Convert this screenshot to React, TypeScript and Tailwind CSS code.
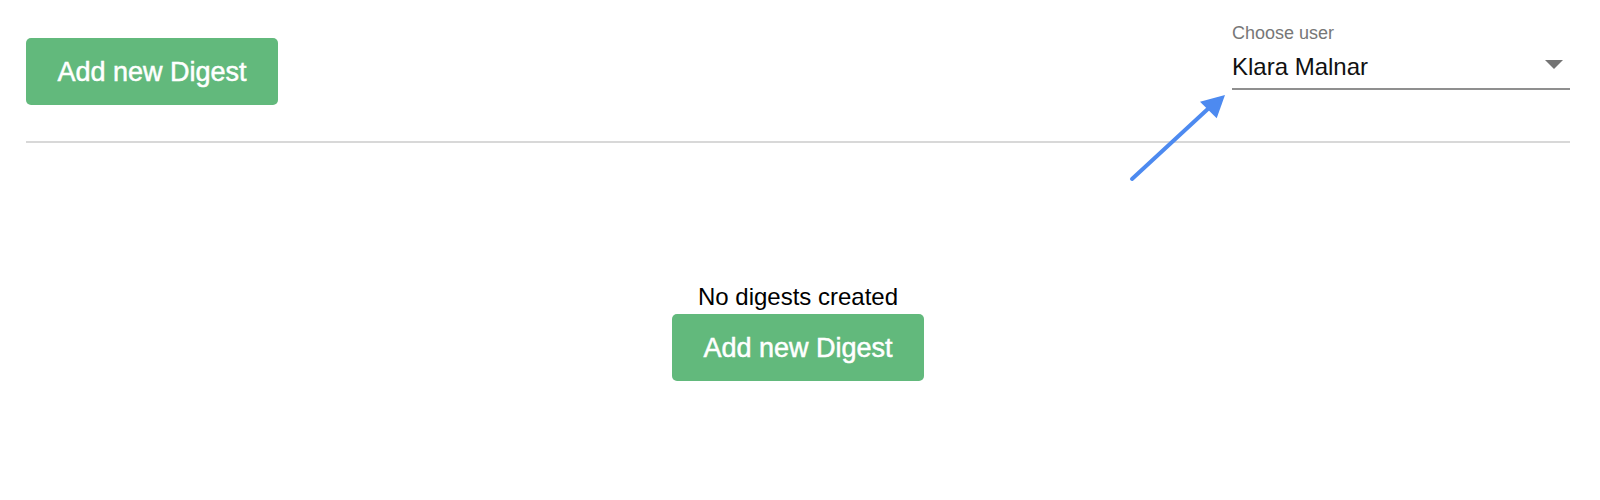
import React, { useState } from 'react';

const users = ['Klara Malnar'];

// Green call-to-action button, used in header and empty state
const AddButton: React.FC<{ onClick?: () => void }> = ({ onClick }) => (
  <button
    onClick={onClick}
    className="flex items-center justify-center w-[252px] h-[67px] pt-[2px] rounded-[5px] bg-[#62b97c] text-white text-[27px] leading-[27px] [-webkit-text-stroke:0.5px_white]"
  >
    Add new Digest
  </button>
);

const UserSelect: React.FC = () => {
  const [user] = useState(users[0]);
  return (
    <div className="w-[338px] mt-[24px]">
      <div className="text-[18px] leading-[18px] text-[#777777]">Choose user</div>
      <div className="flex items-center justify-between mt-[14px] h-[34px] border-b-2 border-[#8f8f8f]">
        <span className="text-[24px] leading-[24px] text-[#111111] pb-[10px]">{user}</span>
        <svg width="18" height="9" viewBox="0 0 18 9" className="mr-[7px] mb-[16px]">
          <path d="M0 0h18L9 9z" fill="#747474" />
        </svg>
      </div>
    </div>
  );
};

export default function App() {
  return (
    <div className="relative min-h-[500px] bg-white pl-[26px] pr-[30px] font-['Liberation_Sans',Arial,sans-serif]">
      {/* Header */}
      <div className="flex items-start justify-between h-[141px]">
        <div className="mt-[38px]">
          <AddButton />
        </div>
        <UserSelect />
      </div>
      <div className="h-[2px] bg-[#d8d8d8]" />

      {/* Empty state */}
      <div className="flex flex-col items-center mt-[142px]">
        <div className="text-[24px] leading-[24px] text-black">No digests created</div>
        <div className="mt-[5px]">
          <AddButton />
        </div>
      </div>

      {/* Annotation arrow */}
      <svg
        className="absolute left-[1120px] top-[85px] pointer-events-none"
        width="120"
        height="110"
        viewBox="0 0 120 110"
      >
        <line x1="12" y1="94" x2="90" y2="22" stroke="#4d8af0" strokeWidth="4" strokeLinecap="round" />
        <path d="M105 10 L80 16.7 L96.7 33.3 Z" fill="#4d8af0" />
      </svg>
    </div>
  );
}
